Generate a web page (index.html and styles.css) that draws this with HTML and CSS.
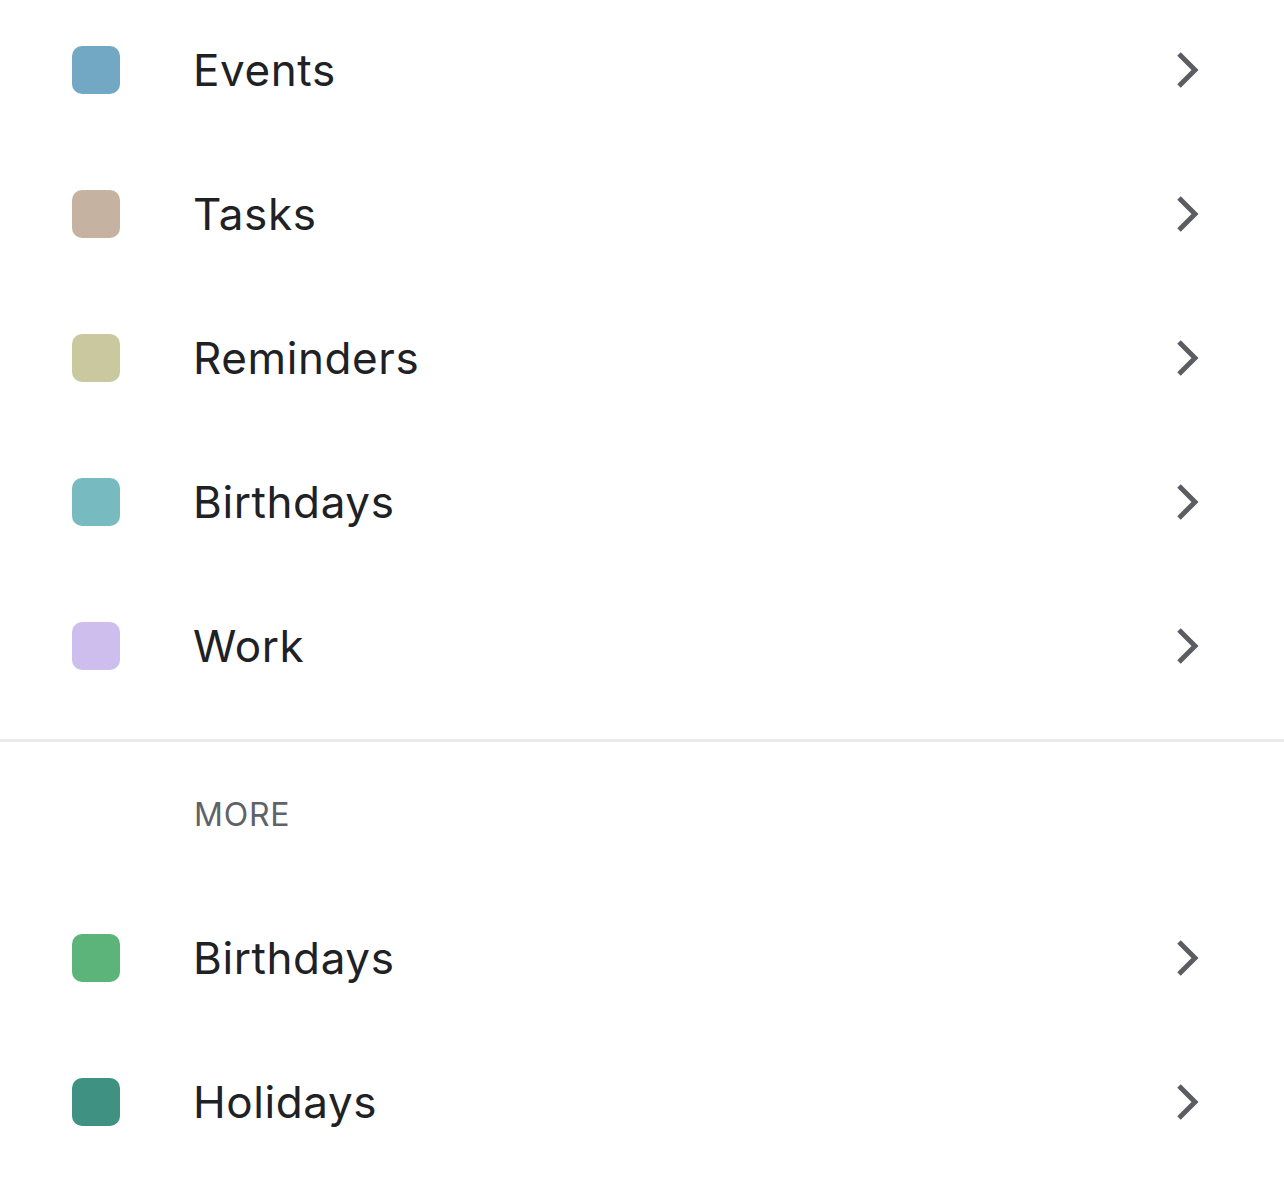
FILE: index.html
```html
<!DOCTYPE html>
<html>
<head>
<meta charset="utf-8">
<link rel="stylesheet" href="styles.css">
</head>
<body>
<div class="list first">
  <div class="row"><span class="sw c1"></span><span class="label">Events</span><svg class="chev" viewBox="0 0 26 40"><path d="M5 4 L21 20 L5 36"/></svg></div>
  <div class="row"><span class="sw c2"></span><span class="label">Tasks</span><svg class="chev" viewBox="0 0 26 40"><path d="M5 4 L21 20 L5 36"/></svg></div>
  <div class="row"><span class="sw c3"></span><span class="label">Reminders</span><svg class="chev" viewBox="0 0 26 40"><path d="M5 4 L21 20 L5 36"/></svg></div>
  <div class="row"><span class="sw c4"></span><span class="label">Birthdays</span><svg class="chev" viewBox="0 0 26 40"><path d="M5 4 L21 20 L5 36"/></svg></div>
  <div class="row"><span class="sw c5"></span><span class="label">Work</span><svg class="chev" viewBox="0 0 26 40"><path d="M5 4 L21 20 L5 36"/></svg></div>
</div>
<div class="divider"></div>
<div class="header">MORE</div>
<div class="list">
  <div class="row"><span class="sw c6"></span><span class="label">Birthdays</span><svg class="chev" viewBox="0 0 26 40"><path d="M5 4 L21 20 L5 36"/></svg></div>
  <div class="row"><span class="sw c7"></span><span class="label">Holidays</span><svg class="chev" viewBox="0 0 26 40"><path d="M5 4 L21 20 L5 36"/></svg></div>
</div>
</body>
</html>
```
FILE: styles.css
```css
html, body { margin: 0; padding: 0; background: #fff; }
body { font-family: Inter, "Noto Sans", sans-serif; color: #202124; }
.list.first { margin-top: -2px; }
.row { height: 144px; display: flex; align-items: center; padding: 0 84px 0 72px; }
.sw { width: 48px; height: 48px; border-radius: 10px; flex: none; }
.label { margin-left: 73px; font-size: 44px; flex: 1; letter-spacing: 0.6px; }
.chev { width: 26px; height: 40px; flex: none; }
.chev path { fill: none; stroke: #5a5d62; stroke-width: 5; stroke-linecap: butt; stroke-linejoin: miter; }
.c1 { background: #72a8c3; }
.c2 { background: #c6b2a0; }
.c3 { background: #c9c89f; }
.c4 { background: #77bac0; }
.c5 { background: #cebeee; }
.c6 { background: #5db47b; }
.c7 { background: #3f9282; }
.divider { margin-top: 21px; height: 3px; background: #ebebeb; }
.header { height: 144px; display: flex; align-items: center; padding-left: 194px; font-size: 32px; color: #5f6368; letter-spacing: 0.8px; }
```
